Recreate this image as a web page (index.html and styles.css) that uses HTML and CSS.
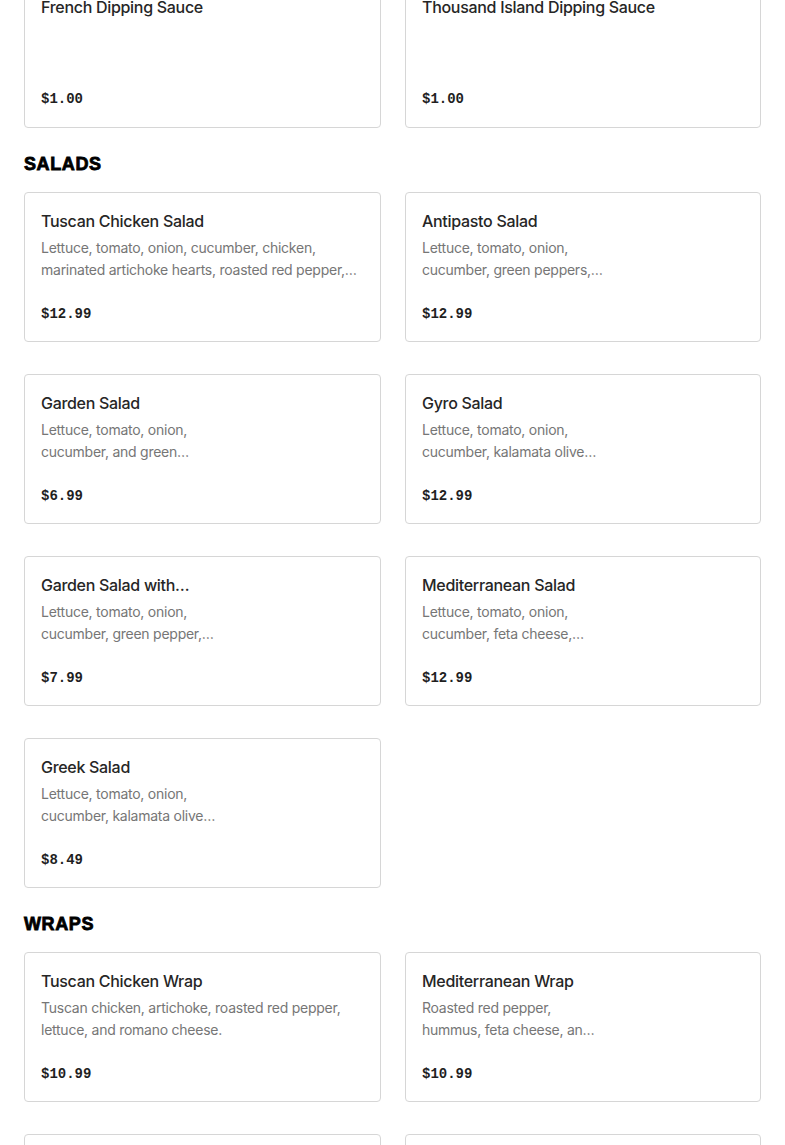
FILE: index.html
```html
<!DOCTYPE html>
<html lang="en">
<head>
<meta charset="utf-8">
<title>Menu</title>
<link rel="stylesheet" href="styles.css">
</head>
<body>
<main class="menu">
  <section class="section section--first">
    <div class="grid">
      <article class="card">
        <h3 class="card-title">French Dipping Sauce</h3>
        <p class="card-desc"></p>
        <div class="card-price">$1.00</div>
      </article>
      <article class="card">
        <h3 class="card-title">Thousand Island Dipping Sauce</h3>
        <p class="card-desc"></p>
        <div class="card-price">$1.00</div>
      </article>
    </div>
  </section>

  <section class="section">
    <h2 class="section-title">SALADS</h2>
    <div class="grid">
      <article class="card">
        <h3 class="card-title">Tuscan Chicken Salad</h3>
        <p class="card-desc"><span class="line">Lettuce, tomato, onion, cucumber, chicken,</span><span class="line">marinated artichoke hearts, roasted red pepper,…</span></p>
        <div class="card-price">$12.99</div>
      </article>
      <article class="card">
        <h3 class="card-title">Antipasto Salad</h3>
        <p class="card-desc"><span class="line">Lettuce, tomato, onion,</span><span class="line">cucumber, green peppers,…</span></p>
        <div class="card-price">$12.99</div>
      </article>
      <article class="card">
        <h3 class="card-title">Garden Salad</h3>
        <p class="card-desc"><span class="line">Lettuce, tomato, onion,</span><span class="line">cucumber, and green…</span></p>
        <div class="card-price">$6.99</div>
      </article>
      <article class="card">
        <h3 class="card-title">Gyro Salad</h3>
        <p class="card-desc"><span class="line">Lettuce, tomato, onion,</span><span class="line">cucumber, kalamata olive…</span></p>
        <div class="card-price">$12.99</div>
      </article>
      <article class="card">
        <h3 class="card-title">Garden Salad with…</h3>
        <p class="card-desc"><span class="line">Lettuce, tomato, onion,</span><span class="line">cucumber, green pepper,…</span></p>
        <div class="card-price">$7.99</div>
      </article>
      <article class="card">
        <h3 class="card-title">Mediterranean Salad</h3>
        <p class="card-desc"><span class="line">Lettuce, tomato, onion,</span><span class="line">cucumber, feta cheese,…</span></p>
        <div class="card-price">$12.99</div>
      </article>
      <article class="card">
        <h3 class="card-title">Greek Salad</h3>
        <p class="card-desc"><span class="line">Lettuce, tomato, onion,</span><span class="line">cucumber, kalamata olive…</span></p>
        <div class="card-price">$8.49</div>
      </article>
    </div>
  </section>

  <section class="section">
    <h2 class="section-title">WRAPS</h2>
    <div class="grid">
      <article class="card">
        <h3 class="card-title">Tuscan Chicken Wrap</h3>
        <p class="card-desc"><span class="line">Tuscan chicken, artichoke, roasted red pepper,</span><span class="line">lettuce, and romano cheese.</span></p>
        <div class="card-price">$10.99</div>
      </article>
      <article class="card">
        <h3 class="card-title">Mediterranean Wrap</h3>
        <p class="card-desc"><span class="line">Roasted red pepper,</span><span class="line">hummus, feta cheese, an…</span></p>
        <div class="card-price">$10.99</div>
      </article>
      <article class="card">
        <h3 class="card-title">Gyro Wrap</h3>
        <p class="card-desc"><span class="line">Gyro meat, lettuce, tomato,</span><span class="line">onion, and tzatziki sauce.</span></p>
        <div class="card-price">$10.99</div>
      </article>
      <article class="card">
        <h3 class="card-title">Greek Wrap</h3>
        <p class="card-desc"><span class="line">Lettuce, tomato, onion,</span><span class="line">feta cheese, kalamata olive…</span></p>
        <div class="card-price">$10.99</div>
      </article>
    </div>
  </section>
</main>
</body>
</html>
```

FILE: styles.css
```css
* { box-sizing: border-box; }

html, body {
  margin: 0;
  padding: 0;
  background: #ffffff;
}

body {
  font-family: Inter, "Liberation Sans", Arial, sans-serif;
  color: #2a2a2a;
  overflow: hidden;
}

.menu {
  padding: 0 24px;
  width: 785px;
}

.section--first {
  margin-top: -22px;
}

.section-title {
  margin: 24px 0 16px;
  font-family: "Liberation Sans", Arial, sans-serif;
  font-weight: 900;
  font-size: 18px;
  line-height: 24px;
  color: #000;
  letter-spacing: 0.6px;
  -webkit-text-stroke: 0.8px #000;
}

.grid {
  display: grid;
  grid-template-columns: 357px 356px;
  column-gap: 24px;
  row-gap: 32px;
}

.card {
  border: 1px solid #d6d6d6;
  border-radius: 4px;
  padding: 16px;
  display: flex;
  flex-direction: column;
  height: 150px;
}

.card-title {
  margin: 0;
  font-size: 16px;
  line-height: 24px;
  font-weight: 500;
  letter-spacing: -0.3px;
  color: #262626;
  white-space: nowrap;
}

.card-desc {
  margin: 4px 0 0;
  height: 44px;
  font-size: 14px;
  line-height: 22px;
  letter-spacing: -0.25px;
  color: #767676;
}

.line {
  display: block;
  white-space: nowrap;
}

.card-price {
  margin-top: 20px;
  padding-top: 1px;
  font-family: "Liberation Mono", "Courier New", monospace;
  font-weight: 700;
  font-size: 14px;
  line-height: 24px;
  color: #1f1f1f;
}
```
